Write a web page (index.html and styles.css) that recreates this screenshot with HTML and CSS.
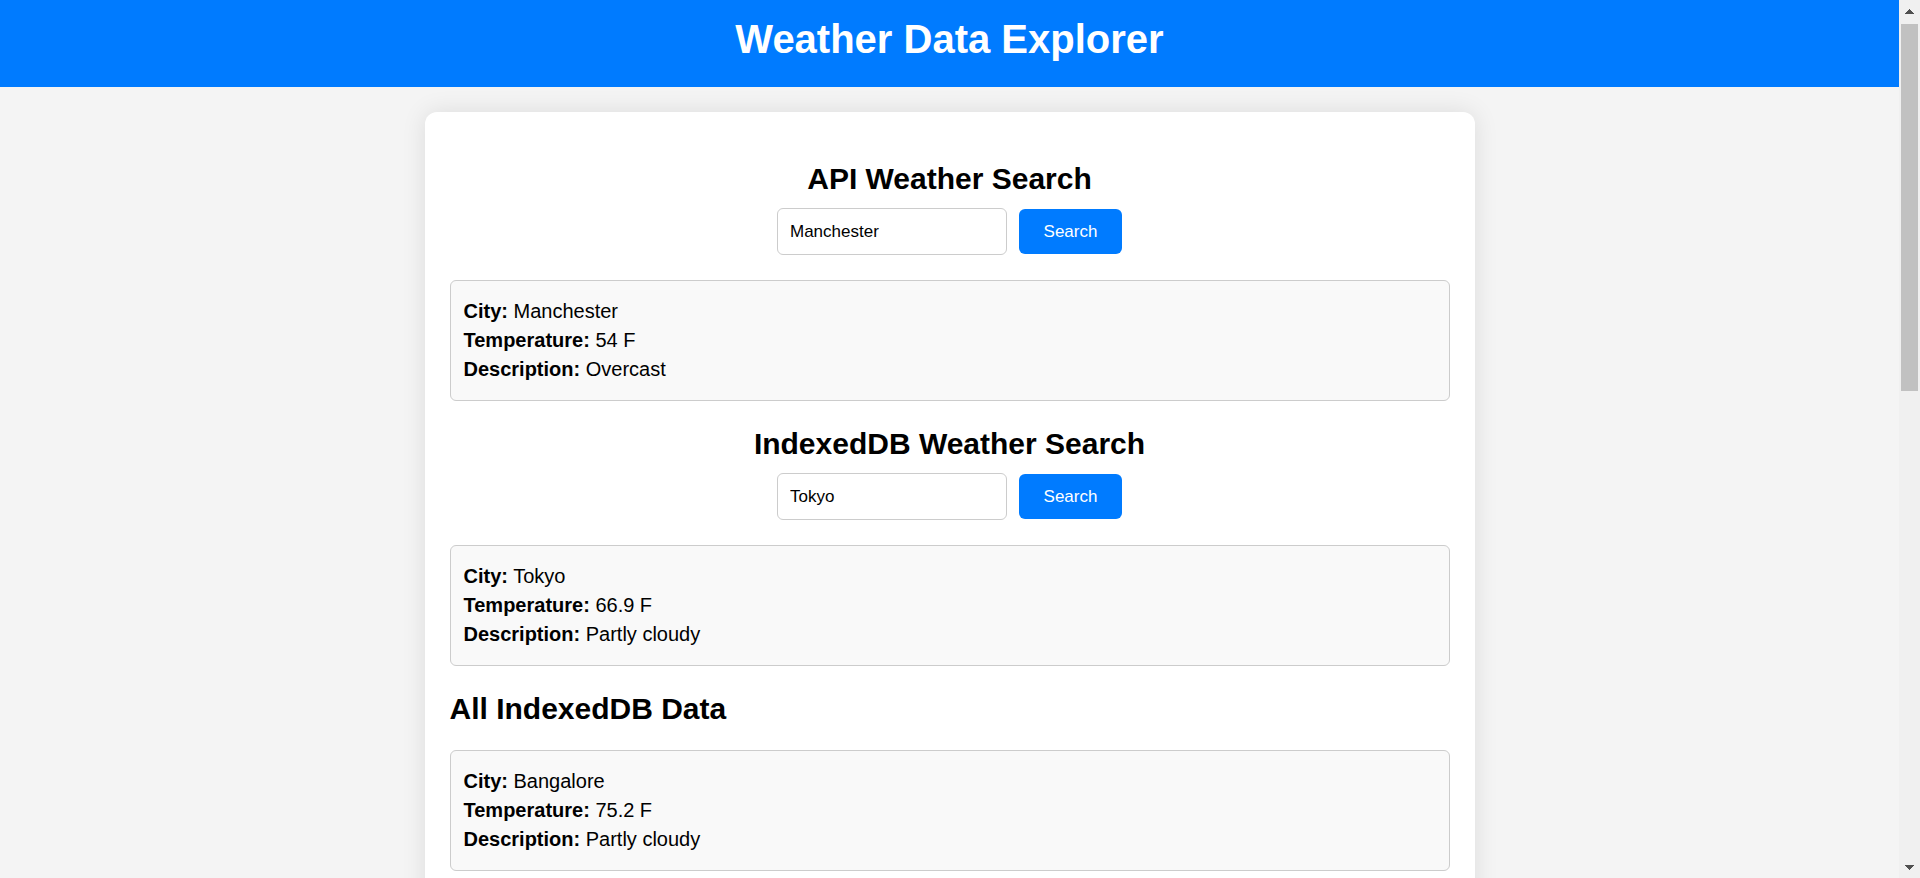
FILE: index.html
```html
<!DOCTYPE html>
<html lang="en">
<head>
  <meta charset="utf-8">
  <title>Weather Data Explorer</title>
  <link rel="stylesheet" href="styles.css">
</head>
<body>
  <div class="page">
    <header class="header">
      <h1 class="header-title">Weather Data Explorer</h1>
    </header>
    <main class="container">
      <section class="section">
        <h2 class="section-title centered">API Weather Search</h2>
        <form class="search">
          <input class="search-input" type="text" aria-label="City for API search" value="Manchester">
          <button class="search-button" type="button">Search</button>
        </form>
        <div class="result">
          <p class="result-line"><strong>City:</strong> Manchester</p>
          <p class="result-line"><strong>Temperature:</strong> 54 F</p>
          <p class="result-line"><strong>Description:</strong> Overcast</p>
        </div>
      </section>
      <section class="section">
        <h2 class="section-title centered">IndexedDB Weather Search</h2>
        <form class="search">
          <input class="search-input" type="text" aria-label="City for IndexedDB search" value="Tokyo">
          <button class="search-button" type="button">Search</button>
        </form>
        <div class="result">
          <p class="result-line"><strong>City:</strong> Tokyo</p>
          <p class="result-line"><strong>Temperature:</strong> 66.9 F</p>
          <p class="result-line"><strong>Description:</strong> Partly cloudy</p>
        </div>
      </section>
      <section class="section">
        <h2 class="section-title">All IndexedDB Data</h2>
        <div class="result">
          <p class="result-line"><strong>City:</strong> Bangalore</p>
          <p class="result-line"><strong>Temperature:</strong> 75.2 F</p>
          <p class="result-line"><strong>Description:</strong> Partly cloudy</p>
        </div>
      </section>
    </main>
  </div>
  <div class="scrollbar" aria-hidden="true">
    <svg class="arrow" viewBox="0 0 9 5" shape-rendering="crispEdges"><path d="M4 0h1v1h1v1h1v1h1v1h1v1H0V4h1V3h1V2h1V1h1z"/></svg>
    <div class="track"><div class="thumb"></div></div>
    <svg class="arrow" viewBox="0 0 9 5" shape-rendering="crispEdges"><path d="M0 0h9v1H8v1H7v1H6v1H5v1H4V4H3V3H2V2H1V1H0z"/></svg>
  </div>
</body>
</html>
```

FILE: styles.css
```css
* {
  box-sizing: border-box;
}

body {
  display: flex;
  height: 100vh;
  margin: 0;
  overflow: hidden;
  background: #f4f4f4;
  color: #000;
  font-family: Arial, "Liberation Sans", sans-serif;
}

.page {
  flex: 1;
  min-width: 0;
  overflow: hidden;
}

.header {
  padding: 16px 24px 25px;
  background: #007bff;
  color: #fff;
  text-align: center;
}

.header-title {
  margin: 0;
  font-size: 40px;
  line-height: 46px;
}

.container {
  max-width: 1050px;
  margin: 25px auto;
  padding: 49px 25px 25px;
  border-radius: 12px;
  background: #fff;
  box-shadow: 0 0 25px rgba(0, 0, 0, 0.1);
}

.section {
  margin-bottom: 25px;
}

.section-title {
  margin: 0 0 24px;
  font-size: 30px;
  line-height: 35px;
}

.centered {
  margin-bottom: 12px;
  text-align: center;
}

.search {
  display: flex;
  align-items: center;
  justify-content: center;
  gap: 12px;
  margin-bottom: 25px;
}

.search-input {
  width: 230px;
  height: 47px;
  padding: 0 12px;
  border: 1px solid #ccc;
  border-radius: 6px;
  background: #fff;
  color: #000;
  font: 17px Arial, "Liberation Sans", sans-serif;
}

.search-button {
  min-width: 103px;
  height: 45px;
  padding: 0 24px;
  border: 0;
  border-radius: 6px;
  background: #007bff;
  color: #fff;
  font: 17px Arial, "Liberation Sans", sans-serif;
}

.result {
  padding: 16px 13px;
  border: 1px solid #ccc;
  border-radius: 6px;
  background: #f9f9f9;
}

.result-line {
  margin: 0;
  font-size: 20px;
  line-height: 29px;
}

.scrollbar {
  display: flex;
  flex-direction: column;
  align-items: center;
  width: 21px;
  padding: 9px 0 8px;
  background: #f0f0f0;
}

.arrow {
  width: 9px;
  height: 5px;
  fill: #505050;
}

.track {
  flex: 1;
  width: 17px;
  padding: 10px 0;
}

.thumb {
  height: 44.2%;
  background: #c1c1c1;
}
```
